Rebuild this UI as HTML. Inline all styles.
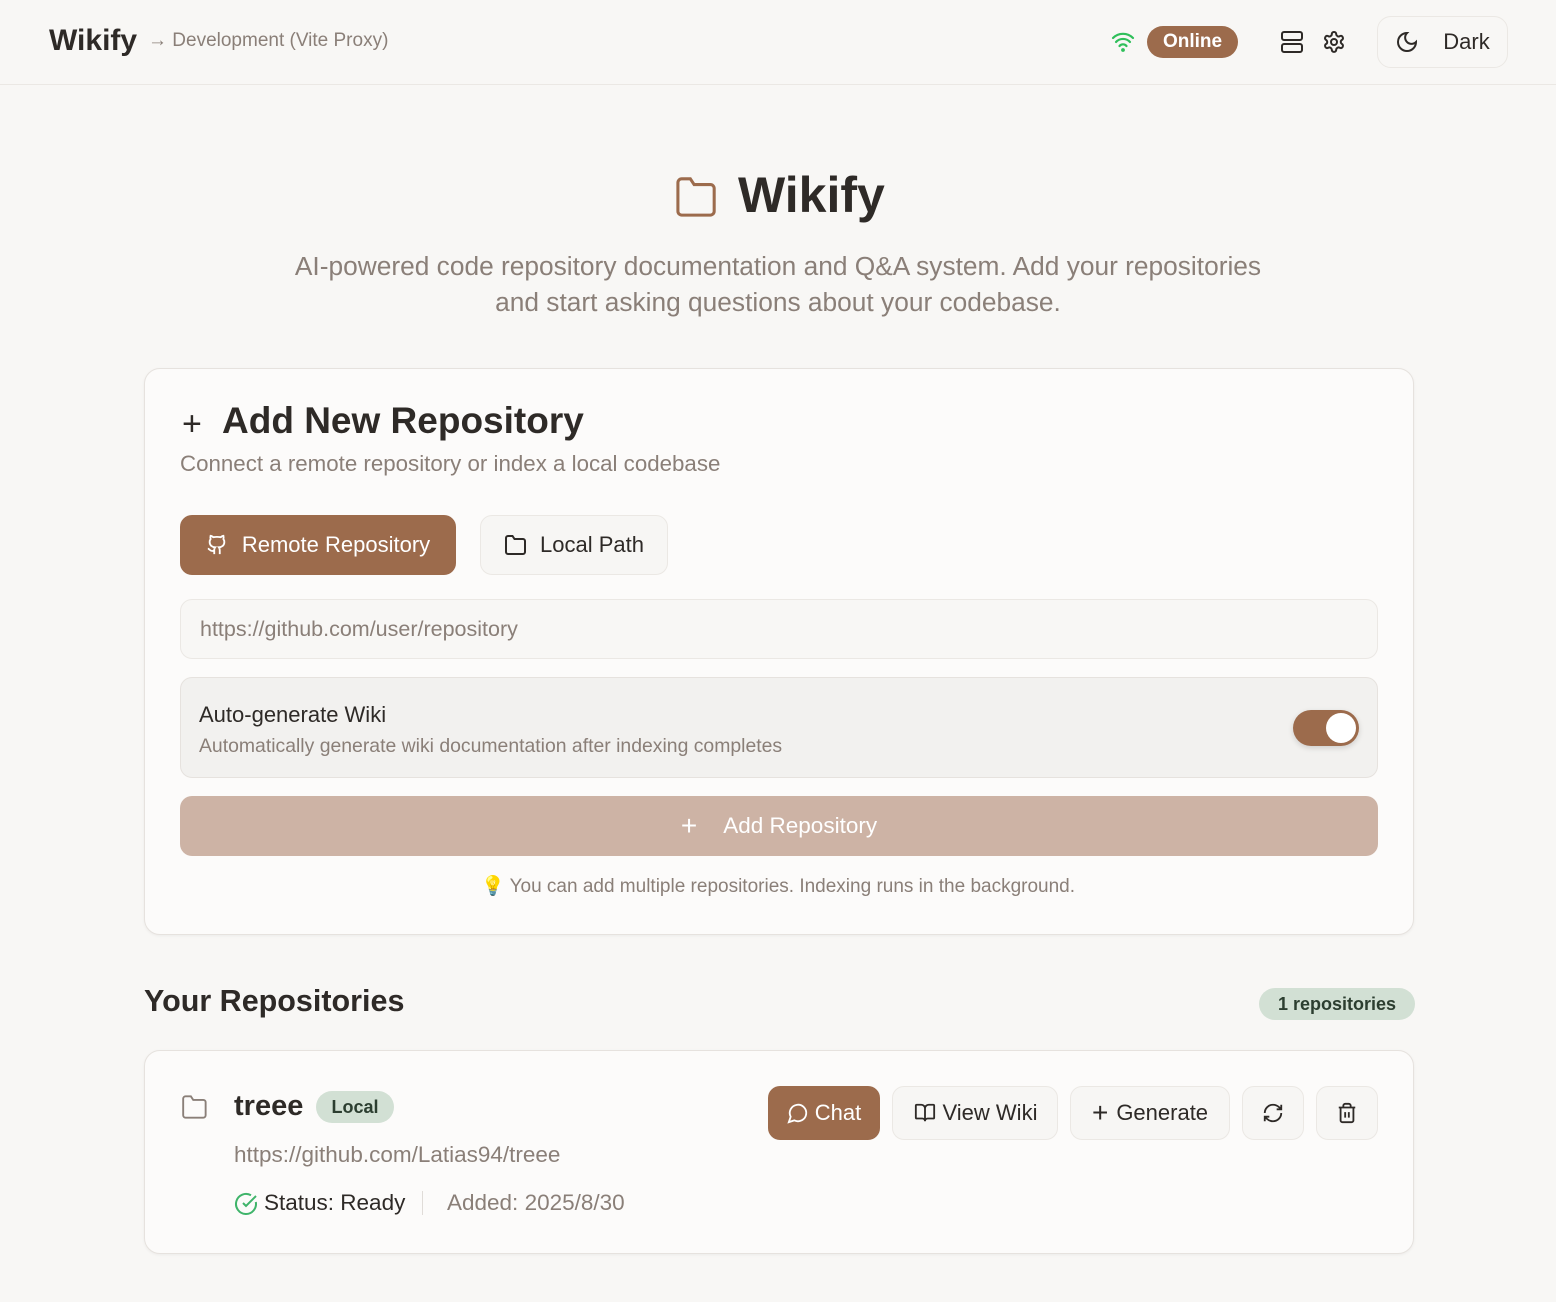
<!DOCTYPE html><html><head><style>
*{box-sizing:border-box;margin:0;padding:0}
body{width:1556px;height:1302px;background:#f8f7f5;font-family:"Liberation Sans",sans-serif;color:#2e2a27;position:relative;overflow:hidden}
.a{position:absolute}
svg{display:block}
.btn{position:absolute;border:1px solid #ebe8e4;background:#f7f6f4;border-radius:12px;display:flex;align-items:center;justify-content:center;font-size:22px;color:#2e2a27}
.card{position:absolute;left:144px;width:1270px;background:#fcfbfa;border:1px solid #e6e2de;border-radius:16px;box-shadow:0 1px 3px rgba(0,0,0,.05)}
</style></head><body>
<div class="a" style="left:0;top:0;width:1556px;height:85px;border-bottom:1px solid #ebe8e4;background:#f8f7f5"></div>
<div class="a" style="left:49px;top:24px;font-size:30px;font-weight:bold">Wikify</div>
<div class="a" style="left:148px;top:30px;font-size:19px;color:#8a7f78">→ Development (Vite Proxy)</div>
<svg class="a" style="left:1111px;top:31px" width="24" height="22" viewBox="0 0 24 22" fill="none" stroke="#2fbf5a" stroke-width="2.2" stroke-linecap="round"><path d="M2 7a14 14 0 0 1 20 0M5 11a9.5 9.5 0 0 1 14 0M8.5 15a4.5 4.5 0 0 1 7 0"/><circle cx="12" cy="19" r=".8" fill="#2fbf5a"/></svg>
<div class="a" style="left:1147px;top:26px;width:91px;height:32px;background:#9c6b4c;border-radius:16px;color:#fff;font-weight:bold;font-size:19px;text-align:center;line-height:32px">Online</div>
<svg class="a" style="left:1280px;top:30px" width="24" height="24" viewBox="0 0 24 24" fill="none" stroke="#2e2a27" stroke-width="2"><rect x="2" y="2" width="20" height="8" rx="2"/><rect x="2" y="14" width="20" height="8" rx="2"/><path d="M6 6h.01M6 18h.01"/></svg>
<svg class="a" style="left:1322px;top:30px" width="24" height="24" viewBox="0 0 24 24" fill="none" stroke="#2e2a27" stroke-width="2"><path d="M12.2 2h-.4a2 2 0 0 0-2 2v.2a2 2 0 0 1-1 1.7l-.4.3a2 2 0 0 1-2 0l-.2-.1a2 2 0 0 0-2.7.7l-.2.4a2 2 0 0 0 .7 2.7l.2.1a2 2 0 0 1 1 1.7v.5a2 2 0 0 1-1 1.7l-.2.1a2 2 0 0 0-.7 2.7l.2.4a2 2 0 0 0 2.7.7l.2-.1a2 2 0 0 1 2 0l.4.3a2 2 0 0 1 1 1.7v.2a2 2 0 0 0 2 2h.4a2 2 0 0 0 2-2v-.2a2 2 0 0 1 1-1.7l.4-.3a2 2 0 0 1 2 0l.2.1a2 2 0 0 0 2.7-.7l.2-.4a2 2 0 0 0-.7-2.7l-.2-.1a2 2 0 0 1-1-1.7v-.5a2 2 0 0 1 1-1.7l.2-.1a2 2 0 0 0 .7-2.7l-.2-.4a2 2 0 0 0-2.7-.7l-.2.1a2 2 0 0 1-2 0l-.4-.3a2 2 0 0 1-1-1.7V4a2 2 0 0 0-2-2z"/><circle cx="12" cy="12" r="3"/></svg>
<div class="btn" style="left:1377px;top:16px;width:131px;height:52px;border-radius:14px;background:#f8f7f5">
<svg width="24" height="24" viewBox="0 0 24 24" fill="none" stroke="#2e2a27" stroke-width="2" style="margin-right:24px"><path d="M12 3a6 6 0 0 0 9 9 9 9 0 1 1-9-9z"/></svg>Dark</div>

<svg class="a" style="left:674px;top:175px" width="46" height="42" viewBox="0 0 24 22" fill="none" stroke="#9c6b4c" stroke-width="1.6"><path d="M21 19a2 2 0 0 1-2 2H4a2 2 0 0 1-2-2V4a2 2 0 0 1 2-2h4.5l2 3H19a2 2 0 0 1 2 2z"/></svg>
<div class="a" style="left:738px;top:166px;font-size:50px;font-weight:bold">Wikify</div>
<div class="a" style="left:150px;top:248px;width:1256px;text-align:center;font-size:26.3px;line-height:36px;color:#8a7f78">AI-powered code repository documentation and Q&amp;A system. Add your repositories<br>and start asking questions about your codebase.</div>

<div class="card" style="top:368px;height:567px"></div>
<div class="a" style="left:182px;top:405px;font-size:34px;font-weight:300">+</div>
<div class="a" style="left:222px;top:400px;font-size:37px;font-weight:bold">Add New Repository</div>
<div class="a" style="left:180px;top:451px;font-size:22.3px;color:#8a7f78">Connect a remote repository or index a local codebase</div>
<div class="btn" style="left:180px;top:515px;width:276px;height:60px;background:#9c6b4c;border-color:#9c6b4c;color:#fff">
<svg width="22" height="22" viewBox="0 0 24 24" fill="none" stroke="#fff" stroke-width="2" style="margin-right:14px"><path d="M15 22v-4a4.8 4.8 0 0 0-1-3.5c3 0 6-2 6-5.5.08-1.25-.27-2.480-1-3.5.28-1.15.28-2.35 0-3.5 0 0-1 0-3 1.5-2.64-.5-5.36-.5-8 0C6 2 5 2 5 2c-.3 1.15-.3 2.350 0 3.5A5.4 5.4 0 0 0 4 9c0 3.5 3 5.5 6 5.5-.39.49-.68 1.05-.85 1.65S8.93 17.38 9 18v4M9 18c-4.51 2-5-2-7-2"/></svg>Remote Repository</div>
<div class="btn" style="left:480px;top:515px;width:188px;height:60px">
<svg width="24" height="22" viewBox="0 0 24 22" fill="none" stroke="#2e2a27" stroke-width="2" style="margin-right:12px"><path d="M21 18a2 2 0 0 1-2 2H4a2 2 0 0 1-2-2V4a2 2 0 0 1 2-2h4.5l2 3H19a2 2 0 0 1 2 2z"/></svg>Local Path</div>
<div class="a" style="left:180px;top:599px;width:1198px;height:60px;border:1px solid #ebe8e4;border-radius:12px;background:#f8f7f5;padding-left:19px;line-height:58px;font-size:21.5px;color:#8a7f78">https://github.com/user/repository</div>
<div class="a" style="left:180px;top:677px;width:1198px;height:101px;border:1px solid #e6e2de;border-radius:12px;background:#f2f1ef"></div>
<div class="a" style="left:199px;top:702px;font-size:22px">Auto-generate Wiki</div>
<div class="a" style="left:199px;top:735px;font-size:19.4px;color:#8a7f78">Automatically generate wiki documentation after indexing completes</div>
<div class="a" style="left:1293px;top:710px;width:66px;height:36px;border-radius:18px;background:#9c6b4c;box-shadow:0 2px 6px rgba(0,0,0,.15)"></div>
<div class="a" style="left:1326px;top:713px;width:30px;height:30px;border-radius:50%;background:#fff"></div>
<div class="a" style="left:180px;top:796px;width:1198px;height:60px;border-radius:12px;background:#cdb3a5;color:#fff;font-size:22.5px;display:flex;align-items:center;justify-content:center"><span style="font-size:28px;font-weight:300;margin-right:26px">+</span>Add Repository</div>
<div class="a" style="left:0;top:874px;width:1556px;text-align:center;font-size:19px;color:#8a7f78"><span style="color:#f0b429">💡</span> You can add multiple repositories. Indexing runs in the background.</div>

<div class="a" style="left:144px;top:984px;font-size:30.5px;font-weight:bold">Your Repositories</div>
<div class="a" style="left:1259px;top:988px;width:156px;height:32px;border-radius:16px;background:#d2e0d4;color:#2c3e30;font-weight:bold;font-size:18px;text-align:center;line-height:32px">1 repositories</div>

<div class="card" style="top:1050px;height:204px"></div>
<svg class="a" style="left:180px;top:1094px" width="30" height="26" viewBox="0 0 24 22" fill="none" stroke="#8a7f78" stroke-width="1.6"><path d="M21 18a2 2 0 0 1-2 2H4a2 2 0 0 1-2-2V4a2 2 0 0 1 2-2h4.5l2 3H19a2 2 0 0 1 2 2z"/></svg>
<div class="a" style="left:234px;top:1090px;font-size:29px;font-weight:bold">treee</div>
<div class="a" style="left:316px;top:1091px;width:78px;height:32px;border-radius:16px;background:#d2e0d4;color:#2c3e30;font-weight:bold;font-size:18px;text-align:center;line-height:32px">Local</div>
<div class="a" style="left:234px;top:1142px;font-size:22.5px;color:#8a7f78">https://github.com/Latias94/treee</div>
<svg class="a" style="left:234px;top:1192px" width="24" height="24" viewBox="0 0 24 24" fill="none" stroke="#3fb46a" stroke-width="2"><path d="M21.8 10A10 10 0 1 1 17 3.3"/><path d="m9 11 3 3L22 4"/></svg>
<div class="a" style="left:264px;top:1190px;font-size:22.5px">Status: Ready</div>
<div class="a" style="left:422px;top:1191px;width:1px;height:24px;background:#e0dcd8"></div>
<div class="a" style="left:447px;top:1190px;font-size:22.5px;color:#8a7f78">Added: 2025/8/30</div>

<div class="btn" style="left:768px;top:1086px;width:112px;height:54px;background:#9c6b4c;border-color:#9c6b4c;color:#fff">
<svg width="22" height="22" viewBox="0 0 24 24" fill="none" stroke="#fff" stroke-width="2" style="margin-right:6px"><path d="M7.9 20A9 9 0 1 0 4 16.1L2 22z"/></svg>Chat</div>
<div class="btn" style="left:892px;top:1086px;width:166px;height:54px">
<svg width="24" height="22" viewBox="0 0 24 24" fill="none" stroke="#2e2a27" stroke-width="2" style="margin-right:6px"><path d="M12 7v14M3 18a1 1 0 0 1-1-1V4a1 1 0 0 1 1-1h5a4 4 0 0 1 4 4 4 4 0 0 1 4-4h5a1 1 0 0 1 1 1v13a1 1 0 0 1-1 1h-6a3 3 0 0 0-3 3 3 3 0 0 0-3-3z"/></svg>View Wiki</div>
<div class="btn" style="left:1070px;top:1086px;width:160px;height:54px"><span style="font-size:28px;font-weight:300;margin-right:8px">+</span>Generate</div>
<div class="btn" style="left:1242px;top:1086px;width:62px;height:54px">
<svg width="22" height="22" viewBox="0 0 24 24" fill="none" stroke="#2e2a27" stroke-width="2"><path d="M3 12a9 9 0 0 1 9-9 9.75 9.75 0 0 1 6.74 2.74L21 8M21 3v5h-5M21 12a9 9 0 0 1-9 9 9.75 9.75 0 0 1-6.74-2.74L3 16M8 16H3v5"/></svg></div>
<div class="btn" style="left:1316px;top:1086px;width:62px;height:54px">
<svg width="22" height="22" viewBox="0 0 24 24" fill="none" stroke="#2e2a27" stroke-width="2"><path d="M3 6h18M19 6v14a2 2 0 0 1-2 2H7a2 2 0 0 1-2-2V6M8 6V4a2 2 0 0 1 2-2h4a2 2 0 0 1 2 2v2M10 11v6M14 11v6"/></svg></div>
</body></html>
